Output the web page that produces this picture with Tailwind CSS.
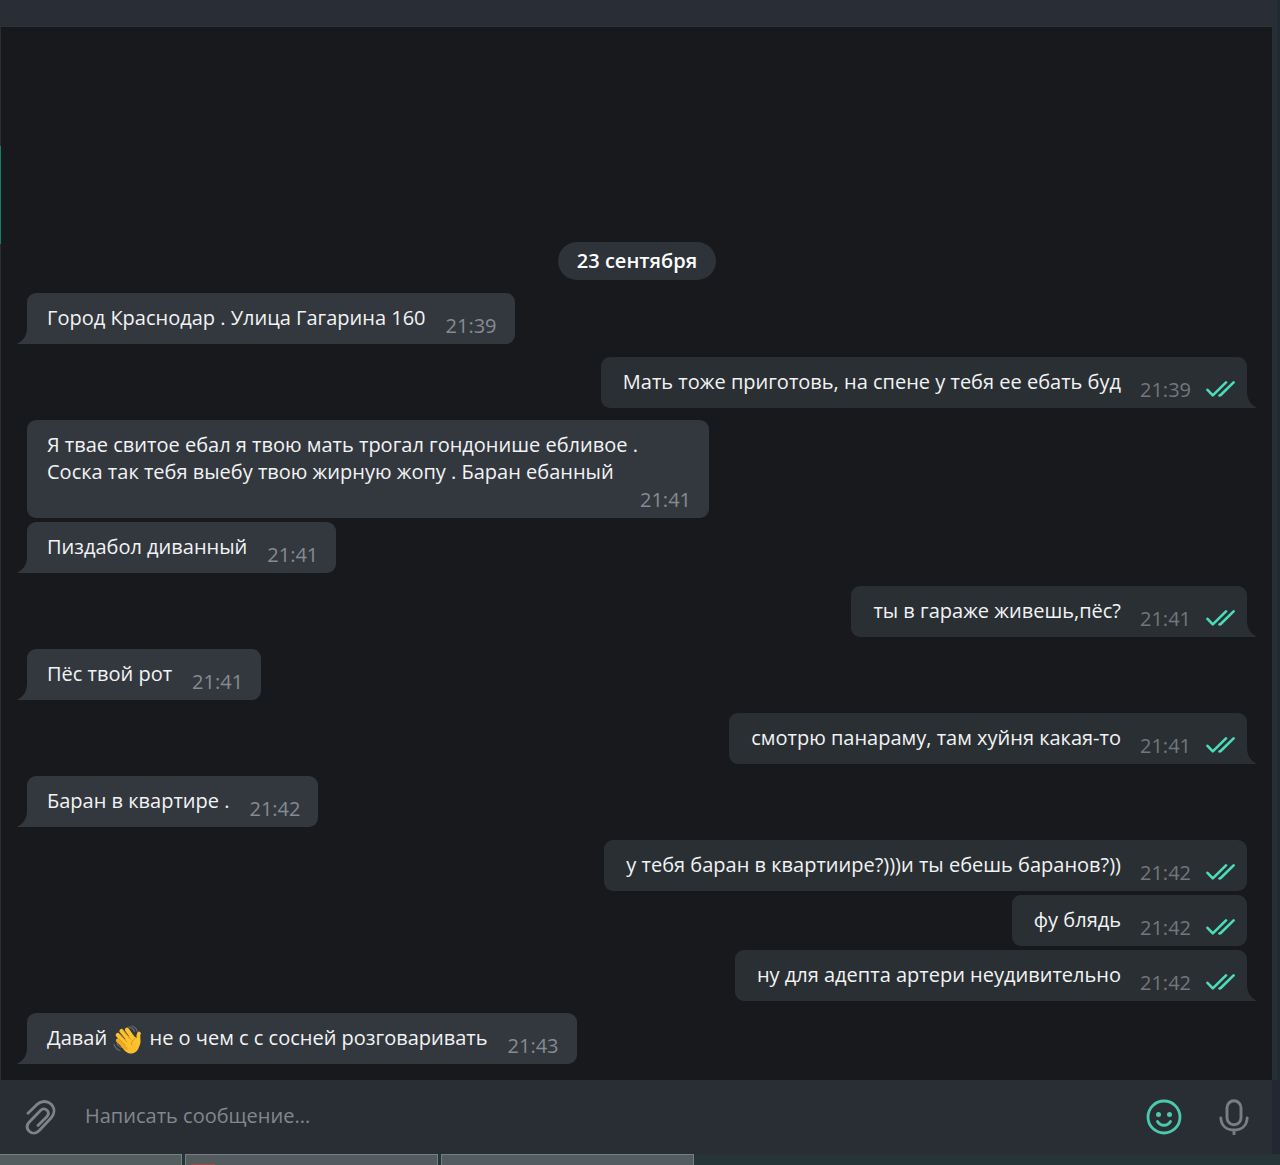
<!DOCTYPE html>
<html lang="ru">
<head>
  <meta charset="UTF-8" />
  <meta name="viewport" content="width=device-width, initial-scale=1.0"/>
  <title>Чат</title>
  <script src="https://cdn.jsdelivr.net/npm/@tailwindcss/browser@4"></script>
</head>
<body class="bg-[#18191c] text-[#f2f3f4] min-h-screen flex flex-col font-['Open_Sans','Noto_Sans',sans-serif] text-[20px] leading-[27px]">

  <!-- Shared icons -->
  <svg class="hidden">
    <symbol id="checks" viewBox="0 0 29 18">
      <path d="M1.500 8.800 6.800 14.400 20 1.400M13.500 14.400l1.200-.4L27.600 1.400" fill="none" stroke="#4bdcbb" stroke-width="2.600" stroke-linecap="round" stroke-linejoin="round"/>
    </symbol>
    <symbol id="tail" viewBox="0 0 20 20">
      <path d="M10 0v3C10 11 7 16 1 19.300L0 20h20V0z" fill="currentColor"/>
    </symbol>
  </svg>

  <div class="grow flex">
    <div class="grow min-w-0 flex flex-col border-l border-[#2a2e33] relative">
      <div class="absolute -left-px top-[146px] w-px h-[98px] bg-[#12806c]"></div>

      <header class="h-[27px] bg-[#292e36] border-b border-[#2c3235]"></header>

      <main class="grow flex flex-col justify-end pl-[26px] pr-[25px] pb-4">
        <div class="self-center bg-[#2d3339] text-white font-semibold rounded-full px-[19px] h-[38px] leading-[38px] mb-[13px]">23 сентября</div>

        <div class="relative self-start flex flex-wrap items-end justify-end max-w-[682px] bg-[#33383e] rounded-[9px] pt-[11px] pb-[5px] pl-5 pr-[18px] gap-x-5 mb-[13px]">
          <svg class="absolute -left-[10px] bottom-0 w-5 h-5 text-[#33383e]"><use href="#tail"/></svg>
          <p class="relative pb-2">Город Краснодар . Улица Гагарина 160</p>
          <time class="text-[#858b92]">21:39</time>
        </div>

        <div class="relative self-end flex items-end bg-[#2a2f33] rounded-[9px] pt-[11px] pb-[5px] pl-[22px] pr-3 gap-x-[19px] mb-3">
          <svg class="absolute -right-[10px] bottom-0 w-5 h-5 text-[#2a2f33] -scale-x-100"><use href="#tail"/></svg>
          <p class="relative pb-2">Мать тоже приготовь, на спене у тебя ее ебать буд</p>
          <div class="relative flex items-center gap-[15px] text-[#71777c]"><time>21:39</time><svg class="w-[29px] h-[18px]"><use href="#checks"/></svg></div>
        </div>

        <div class="self-start flex flex-wrap items-end justify-end max-w-[682px] bg-[#33383e] rounded-[9px] pt-[11px] pb-[5px] pl-5 pr-[18px] gap-x-5 gap-y-px mb-1">
          <p>Я твае свитое ебал я твою мать трогал гондонише ебливое . Соска так тебя выебу твою жирную жопу . Баран ебанный</p>
          <time class="text-[#858b92]">21:41</time>
        </div>

        <div class="relative self-start flex items-end bg-[#33383e] rounded-[9px] pt-[11px] pb-[5px] pl-5 pr-[18px] gap-x-5 mb-[13px]">
          <svg class="absolute -left-[10px] bottom-0 w-5 h-5 text-[#33383e]"><use href="#tail"/></svg>
          <p class="relative pb-2">Пиздабол диванный</p>
          <time class="text-[#858b92]">21:41</time>
        </div>

        <div class="relative self-end flex items-end bg-[#2a2f33] rounded-[9px] pt-[11px] pb-[5px] pl-[22px] pr-3 gap-x-[19px] mb-3">
          <svg class="absolute -right-[10px] bottom-0 w-5 h-5 text-[#2a2f33] -scale-x-100"><use href="#tail"/></svg>
          <p class="relative pb-2">ты в гараже живешь,пёс?</p>
          <div class="relative flex items-center gap-[15px] text-[#71777c]"><time>21:41</time><svg class="w-[29px] h-[18px]"><use href="#checks"/></svg></div>
        </div>

        <div class="relative self-start flex items-end bg-[#33383e] rounded-[9px] pt-[11px] pb-[5px] pl-5 pr-[18px] gap-x-5 mb-[13px]">
          <svg class="absolute -left-[10px] bottom-0 w-5 h-5 text-[#33383e]"><use href="#tail"/></svg>
          <p class="relative pb-2">Пёс твой рот</p>
          <time class="text-[#858b92]">21:41</time>
        </div>

        <div class="relative self-end flex items-end bg-[#2a2f33] rounded-[9px] pt-[11px] pb-[5px] pl-[22px] pr-3 gap-x-[19px] mb-3">
          <svg class="absolute -right-[10px] bottom-0 w-5 h-5 text-[#2a2f33] -scale-x-100"><use href="#tail"/></svg>
          <p class="relative pb-2">смотрю панараму, там хуйня какая-то</p>
          <div class="relative flex items-center gap-[15px] text-[#71777c]"><time>21:41</time><svg class="w-[29px] h-[18px]"><use href="#checks"/></svg></div>
        </div>

        <div class="relative self-start flex items-end bg-[#33383e] rounded-[9px] pt-[11px] pb-[5px] pl-5 pr-[18px] gap-x-5 mb-[13px]">
          <svg class="absolute -left-[10px] bottom-0 w-5 h-5 text-[#33383e]"><use href="#tail"/></svg>
          <p class="relative pb-2">Баран в квартире .</p>
          <time class="text-[#858b92]">21:42</time>
        </div>

        <div class="self-end flex items-end bg-[#2a2f33] rounded-[9px] pt-[11px] pb-[5px] pl-[22px] pr-3 gap-x-[19px] mb-1">
          <p class="pb-2">у тебя баран в квартиире?)))и ты ебешь баранов?))</p>
          <div class="flex items-center gap-[15px] text-[#71777c]"><time>21:42</time><svg class="w-[29px] h-[18px]"><use href="#checks"/></svg></div>
        </div>

        <div class="self-end flex items-end bg-[#2a2f33] rounded-[9px] pt-[11px] pb-[5px] pl-[22px] pr-3 gap-x-[19px] mb-1">
          <p class="pb-2">фу блядь</p>
          <div class="flex items-center gap-[15px] text-[#71777c]"><time>21:42</time><svg class="w-[29px] h-[18px]"><use href="#checks"/></svg></div>
        </div>

        <div class="relative self-end flex items-end bg-[#2a2f33] rounded-[9px] pt-[11px] pb-[5px] pl-[22px] pr-3 gap-x-[19px] mb-3">
          <svg class="absolute -right-[10px] bottom-0 w-5 h-5 text-[#2a2f33] -scale-x-100"><use href="#tail"/></svg>
          <p class="relative pb-2">ну для адепта артери неудивительно</p>
          <div class="relative flex items-center gap-[15px] text-[#71777c]"><time>21:42</time><svg class="w-[29px] h-[18px]"><use href="#checks"/></svg></div>
        </div>

        <div class="relative self-start flex items-end bg-[#33383e] rounded-[9px] pt-[11px] pb-[5px] pl-5 pr-[18px] gap-x-5">
          <svg class="absolute -left-[10px] bottom-0 w-5 h-5 text-[#33383e]"><use href="#tail"/></svg>
          <p class="relative pb-2">Давай
            <svg class="inline-block w-8 h-[30px] -my-2" viewBox="-1 0 32 30" role="img" aria-label="машет рукой" fill="none" stroke-linecap="round">
              <path d="M1 19.500c1 3 3 5 6 6M4 18.500c.8 2 2 3.300 4 4M16 2c2.500.5 4.500 2 5.500 4.500M19 1c3 1 4.500 3 5 5" stroke="#5d6b72" stroke-width="1.300"/>
              <path d="M12 14.500 18 10l6 3c1.500 2 3 5 2 9-1 4-5 7-9 6.500C13 28 10 24 8 21z" fill="#fbbf2d"/>
              <path d="M5 15.500 13 23" stroke="#f6a91c" stroke-width="4.200"/>
              <path d="M4.800 10 15 20.500" stroke="#fcc331" stroke-width="4.200"/>
              <path d="M8.500 6 18 17.500" stroke="#fcc331" stroke-width="4.200"/>
              <path d="M14 4.800 22 16" stroke="#fcc331" stroke-width="4.200"/>
              <path d="M26 8.500c-2 3 1 6-1 11" stroke="#fcc331" stroke-width="3.800"/>
              <path d="m6.500 9 7.500 8M10.800 6.300l6.700 7.900M6 13.800l6.500 6.400M22 13.500c-2 1.500-3.500 3-3.500 6" stroke="#d98b14" stroke-width=".9"/>
            </svg>
            не о чем с с сосней розговаривать</p>
          <time class="text-[#858b92]">21:43</time>
        </div>
      </main>

      <footer class="h-[74px] bg-[#292e35] flex items-center pl-[22px] pr-[23px] pb-px">
        <button type="button" aria-label="Прикрепить файл" class="shrink-0">
          <svg class="w-9 h-9" viewBox="0 0 36 36" fill="none" stroke="#808386" stroke-width="2.800" stroke-linecap="round" stroke-linejoin="round">
            <path d="M5 14.300 14 5.400C18 1.700 24 1.500 28 5c4 4 4 9.500 0 14L16 31.800c-3 3-7 3-9.700.5-2.800-2.800-2.800-6.300 0-9.300L17.500 11.500c2-2 4.500-2 6.500-.2 2 2 1.800 4.200 0 6.200l-9 9"/>
          </svg>
        </button>
        <input type="text" aria-label="Сообщение" placeholder="Написать сообщение..." class="grow min-w-0 h-10 pb-[3px] ml-[26px] bg-transparent outline-none placeholder:text-[#81878d]">
        <button type="button" aria-label="Эмодзи" class="shrink-0">
          <svg class="w-9 h-9" viewBox="0 0 36 36" fill="none" stroke="#4bc9ae" stroke-width="2.800" stroke-linecap="round">
            <circle cx="18" cy="18" r="16"/>
            <circle cx="12.500" cy="15.500" r="2.500" fill="#4bc9ae" stroke="none"/>
            <circle cx="23.500" cy="15.500" r="2.500" fill="#4bc9ae" stroke="none"/>
            <path d="M11.500 22.500c3 5 10 5 13 0"/>
          </svg>
        </button>
        <button type="button" aria-label="Голосовое сообщение" class="shrink-0 ml-[37px]">
          <svg class="w-[30px] h-9" viewBox="0 0 30 36" fill="none" stroke="#7b7e80" stroke-width="2.900" stroke-linecap="round">
            <rect x="8" y="1.800" width="14" height="24" rx="7"/>
            <path d="M1.800 19c.5 8 6 12 13.200 12s12.700-4 13.200-12M15 31v4"/>
          </svg>
        </button>
      </footer>
    </div>
    <div class="w-2 shrink-0 flex flex-col">
      <div class="grow bg-[#282f34] border-r-3 border-[#212a32]"></div>
      <div class="h-[74px] bg-[#222831]"></div>
    </div>
  </div>

  <!-- Taskbar -->
  <div class="h-[11px] bg-[#273437] flex gap-[3px] overflow-hidden">
    <div class="w-[182px] bg-[#535e5f] border-t border-r border-[#748080]"></div>
    <div class="w-[253px] bg-[#535b5e] border-t border-x border-[#748080] flex items-end pl-[5px]"><div class="w-6 h-px bg-[#a84a4a]"></div></div>
    <div class="w-[253px] bg-[#535d5f] border-t border-x border-[#748080]"></div>
  </div>

</body>
</html>
